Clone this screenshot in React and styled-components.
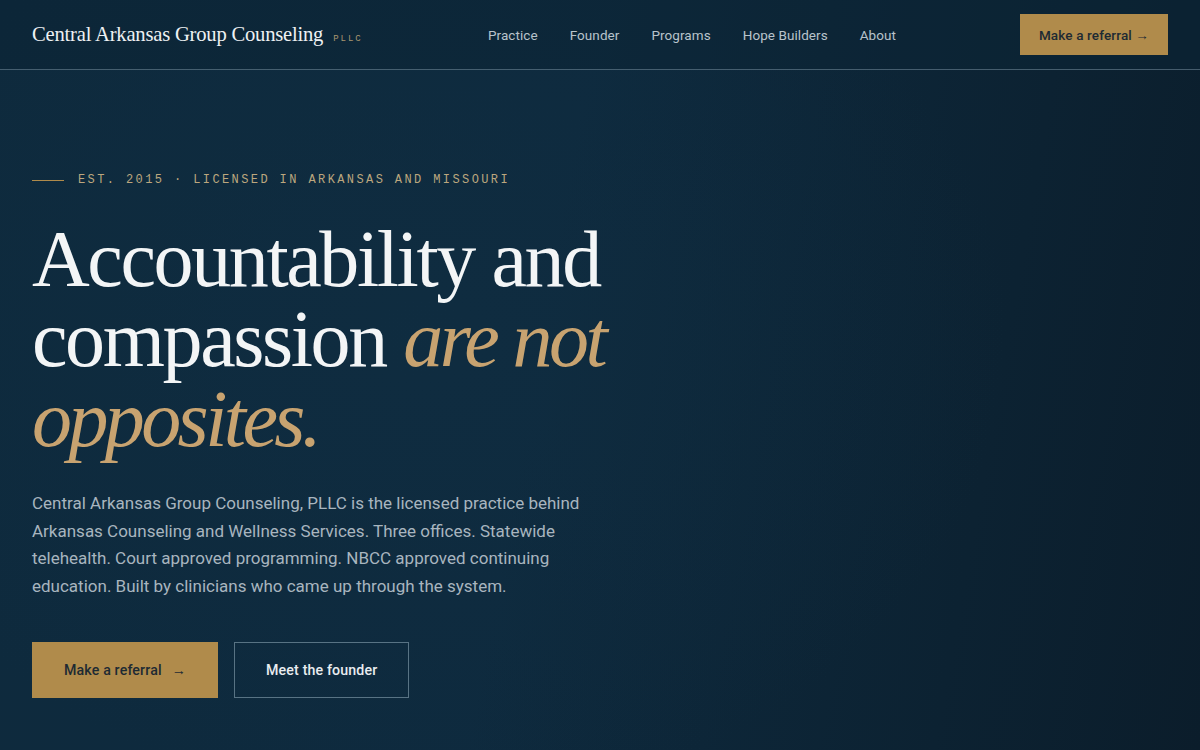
import React from "react";
import styled, { createGlobalStyle } from "styled-components";

const GlobalStyle = createGlobalStyle`
  html, body {
    margin: 0;
    padding: 0;
    background: #0d2739;
  }
  body {
    font-family: "Roboto", "Liberation Sans", sans-serif;
    -webkit-font-smoothing: antialiased;
  }
  * { box-sizing: border-box; }
`;

const Page = styled.div`
  min-height: 750px;
  background:
    radial-gradient(ellipse 70% 90% at 35% 45%, rgba(16, 46, 66, 0.55), rgba(16, 46, 66, 0) 70%),
    linear-gradient(100deg, #0e2a3d 0%, #0e2a3e 45%, #0c2232 80%, #0b1d2b 100%);
`;

const Header = styled.header`
  height: 70px;
  padding: 0 32px;
  display: flex;
  align-items: center;
  border-bottom: 1px solid rgba(140, 165, 180, 0.45);
  background: rgba(11, 36, 54, 0.6);
`;

const Brand = styled.div`
  display: flex;
  align-items: baseline;
  gap: 10px;
  width: 456px;
`;

const BrandName = styled.span`
  font-family: "Liberation Serif", "DejaVu Serif", serif;
  font-size: 20.6px;
  color: #eef1f3;
  letter-spacing: -0.01em;
`;

const BrandTag = styled.span`
  font-family: "Liberation Mono", "DejaVu Sans Mono", monospace;
  font-size: 9px;
  letter-spacing: 0.22em;
  color: #a89670;
`;

const Nav = styled.nav`
  display: flex;
  gap: 32px;
`;

const NavLink = styled.a`
  font-size: 13.5px;
  color: #b8c3cb;
  text-decoration: none;
  letter-spacing: 0.005em;
`;

const Button = styled.a`
  display: inline-flex;
  align-items: center;
  justify-content: center;
  gap: ${(p) => p.$gap || 0}px;
  height: ${(p) => (p.$small ? 41 : 56)}px;
  padding: 0 ${(p) => (p.$small ? 18 : 31)}px;
  margin-left: ${(p) => (p.$push ? "auto" : "0")};
  font-size: ${(p) => (p.$small ? 13.5 : 14.2)}px;
  font-weight: 500;
  text-decoration: none;
  letter-spacing: 0.01em;
  background: ${(p) => (p.$ghost ? "transparent" : "#b08b4b")};
  color: ${(p) => (p.$ghost ? "#e9edf0" : "#1d2a33")};
  border: 1px solid ${(p) => (p.$ghost ? "rgba(150, 175, 190, 0.55)" : "#b08b4b")};
`;

const Hero = styled.section`
  padding: 102px 32px 0;
`;

const Eyebrow = styled.div`
  display: flex;
  align-items: center;
  gap: 14px;
  height: 16px;
  font-family: "Liberation Mono", "DejaVu Sans Mono", monospace;
  font-size: 12px;
  letter-spacing: 0.2em;
  color: #bca77e;
`;

const Rule = styled.span`
  width: 32px;
  height: 1px;
  background: #b08b4b;
`;

const Title = styled.h1`
  margin: 31px 0 0;
  font-family: "Liberation Serif", "DejaVu Serif", serif;
  font-weight: 400;
  font-size: 80px;
  line-height: 80px;
  letter-spacing: -0.03em;
  color: #f3f5f6;
  max-width: 640px;
`;

const Accent = styled.em`
  font-style: italic;
  letter-spacing: -0.045em;
  color: #c8a370;
`;

const Lead = styled.p`
  margin: 31px 0 0;
  max-width: 580px;
  font-size: 17px;
  line-height: 27.5px;
  color: #a8b5bf;
`;

const Actions = styled.div`
  display: flex;
  gap: 16px;
  margin-top: 42px;
`;

export default function App() {
  return (
    <Page>
      <GlobalStyle />
      <Header>
        <Brand>
          <BrandName>Central Arkansas Group Counseling</BrandName>
          <BrandTag>PLLC</BrandTag>
        </Brand>
        <Nav>
          <NavLink href="#">Practice</NavLink>
          <NavLink href="#">Founder</NavLink>
          <NavLink href="#">Programs</NavLink>
          <NavLink href="#">Hope Builders</NavLink>
          <NavLink href="#">About</NavLink>
        </Nav>
        <Button href="#" $small $push>
          Make a referral →
        </Button>
      </Header>
      <Hero>
        <Eyebrow>
          <Rule />
          EST. 2015 · LICENSED IN ARKANSAS AND MISSOURI
        </Eyebrow>
        <Title>
          Accountability and compassion <Accent>are not opposites.</Accent>
        </Title>
        <Lead>
          Central Arkansas Group Counseling, PLLC is the licensed practice behind
          Arkansas Counseling and Wellness Services. Three offices. Statewide
          telehealth. Court approved programming. NBCC approved continuing
          education. Built by clinicians who came up through the system.
        </Lead>
        <Actions>
          <Button href="#" $gap={10}>
            Make a referral <span>→</span>
          </Button>
          <Button href="#" $ghost>
            Meet the founder
          </Button>
        </Actions>
      </Hero>
    </Page>
  );
}
